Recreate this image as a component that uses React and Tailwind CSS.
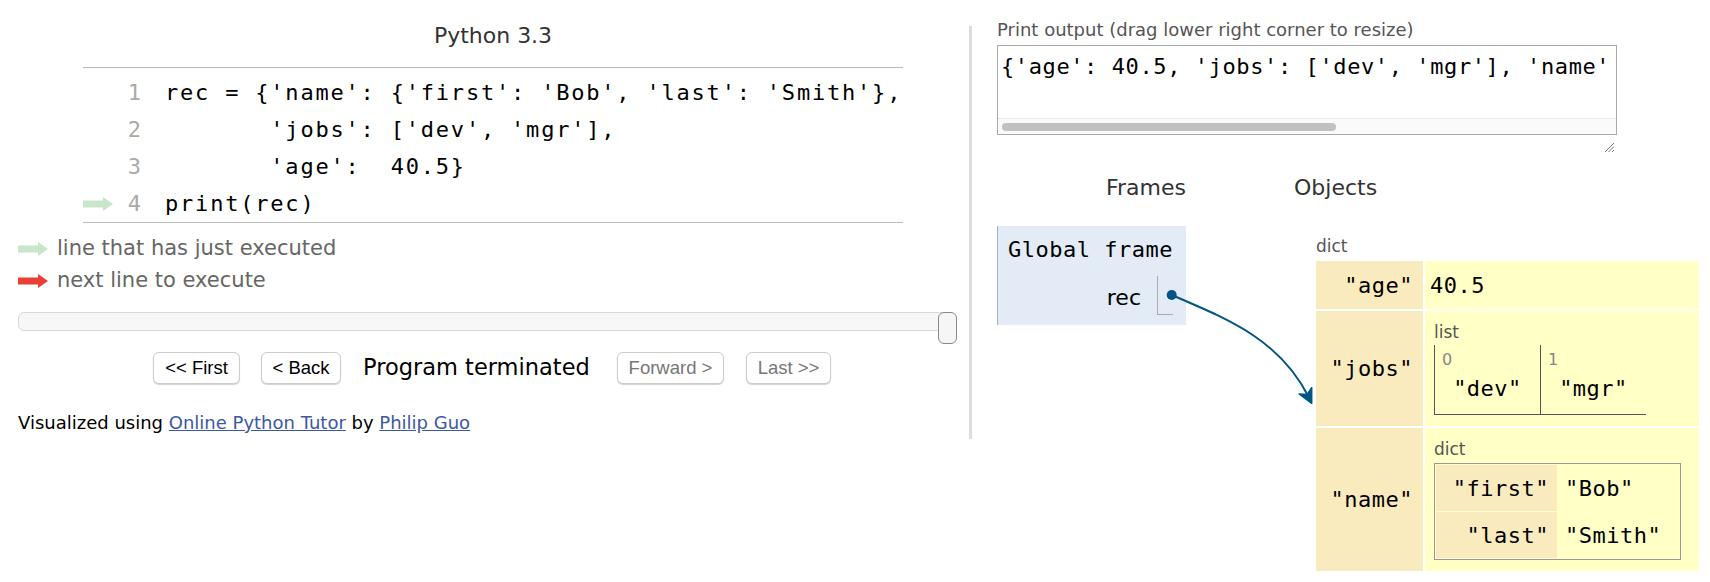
const codeLines = [
  "rec = {'name': {'first': 'Bob', 'last': 'Smith'},",
  "       'jobs': ['dev', 'mgr'],",
  "       'age':  40.5}",
  'print(rec)',
];

function Arrow({ color }) {
  return (
    <svg width="30" height="14" viewBox="0 0 30 14" className="shrink-0">
      <path d="M0 3.5H20V0L30 7L20 14V10.5H0Z" fill={color} />
    </svg>
  );
}

function VcrButton({ label, width, disabled }) {
  return (
    <button
      className={`h-[32px] ${width} shrink-0 rounded-[6px] border border-[#ccc] bg-white font-['Liberation_Sans',sans-serif] text-[18.5px] shadow-[0_1px_1px_rgba(0,0,0,0.18)] ${disabled ? 'text-[#777]' : 'text-black'}`}
    >
      {label}
    </button>
  );
}

function CodePanel() {
  return (
    <div className="mt-[26px] h-[413px] w-[972px] shrink-0 border-r-[3px] border-[#ddd] font-['DejaVu_Sans',sans-serif]">
      <div className="ml-[83px] w-[820px]">
        <div className="h-[41px] text-center text-[22px] leading-[19px] text-[#333]">Python 3.3</div>
        <div className="border-y border-[#bbb] pt-[6px] font-['DejaVu_Sans_Mono',monospace] text-[22px]">
          {codeLines.map((line, i) => (
            <div key={i} className="flex h-[37px] items-center">
              <div className="w-[35px] shrink-0">{i === 3 && <Arrow color="#c9e6ca" />}</div>
              <div className="w-[23px] shrink-0 text-right text-[#aaa]">{i + 1}</div>
              <div className="whitespace-pre pl-[24px] tracking-[1.8px] text-black">{line}</div>
            </div>
          ))}
        </div>
      </div>

      <div className="ml-[18px] mt-[10px] text-[21px] text-[#666]">
        <div className="flex h-[32px] items-center gap-[9px]">
          <Arrow color="#c9e6ca" />
          <span>line that has just executed</span>
        </div>
        <div className="flex h-[32px] items-center gap-[9px]">
          <Arrow color="#e93f34" />
          <span>next line to execute</span>
        </div>
      </div>

      <div className="relative ml-[18px] mt-[15px] h-[32px] w-[939px]">
        <div className="mt-[5px] h-[19px] w-[930px] rounded-[6px] border border-[#d8d8d8] bg-[#f7f7f7]" />
        <div className="absolute right-0 top-0 h-[32px] w-[19px] rounded-[6px] border-[1.5px] border-[#888] bg-[#f6f6f6]" />
      </div>

      <div className="ml-[153px] mt-[8px] flex h-[32px] items-center">
        <VcrButton label="<< First" width="w-[87px]" />
        <div className="ml-[21px]">
          <VcrButton label="< Back" width="w-[80px]" />
        </div>
        <div className="ml-[22px] w-[231px] shrink-0 text-[22.5px] text-black">Program terminated</div>
        <div className="ml-[23px]">
          <VcrButton label="Forward >" width="w-[107px]" disabled />
        </div>
        <div className="ml-[22px]">
          <VcrButton label="Last >>" width="w-[85px]" disabled />
        </div>
      </div>

      <div className="ml-[18px] mt-[28px] text-[18px] leading-[22px] text-black">
        Visualized using <a href="#" className="text-[#3d58a2] underline">Online Python Tutor</a> by{' '}
        <a href="#" className="text-[#3d58a2] underline">Philip Guo</a>
      </div>
    </div>
  );
}

function ListCell({ index, value }) {
  return (
    <div className="h-[69px] w-[106px] border-l border-[#555]">
      <div className="pl-[7px] pt-[5px] font-['DejaVu_Sans',sans-serif] text-[16px] leading-[20px] text-[#888]">{index}</div>
      <div className="mt-[6px] text-center leading-[26px] tracking-[0.5px]">{value}</div>
    </div>
  );
}

function VizPanel() {
  return (
    <div className="flex-1 pl-[25px] font-['DejaVu_Sans',sans-serif]">
      <div className="pt-[19px] text-[18px] leading-[22px] text-[#555]">Print output (drag lower right corner to resize)</div>
      <div className="mt-[4px] flex h-[90px] w-[620px] flex-col overflow-hidden border border-[#a9a9a9]">
        <div className="flex-1 overflow-hidden whitespace-pre px-[3px] pt-[8px] font-['DejaVu_Sans_Mono',monospace] text-[22px] leading-[26px] tracking-[0.6px] text-black">
          {"{'age': 40.5, 'jobs': ['dev', 'mgr'], 'name'"}
        </div>
        <div className="h-[16px] border-t border-[#e8e8e8] bg-[#fafafa] pl-[4px] pt-[4px]">
          <div className="h-[8px] w-[334px] rounded-full bg-[#c1c1c1]" />
        </div>
      </div>
      <div className="mt-[7px] flex h-[10px] w-[620px] justify-end pr-[3px]">
        <svg width="10" height="10" viewBox="0 0 10 10">
          <path d="M10 1L1 10M10 4.5L4.5 10M10 8L8 10" stroke="#777" strokeWidth="1" />
        </svg>
      </div>

      <div className="mt-[23px] flex text-[22px] leading-[26px] text-[#333]">
        <span className="w-[189px] text-right">Frames</span>
        <span className="ml-[108px]">Objects</span>
      </div>

      <div className="mt-[25px] flex items-start">
        <div className="w-[189px] shrink-0 border-l border-[#a6b3b6] bg-[#e2ebf6] pb-[10px] pl-[10px] pr-[13px] pt-[11px]">
          <div className="whitespace-nowrap font-['DejaVu_Sans_Mono',monospace] text-[22px] leading-[26px] tracking-[0.5px] text-black">Global frame</div>
          <div className="mt-[13px] flex h-[39px] items-center justify-end">
            <span className="mr-[16px] pt-[3px] text-[22px] text-black">rec</span>
            <div className="h-[39px] w-[16px] border-b border-l border-[#aaa]" />
          </div>
        </div>

        <div className="ml-[130px] pt-[10px]">
          <div className="text-[17px] leading-[20px] text-[#555]">dict</div>
          <div className="mt-[5px] grid w-[383px] grid-cols-[107px_274px] gap-[2px] font-['DejaVu_Sans_Mono',monospace] text-[22px] text-black">
            <div className="flex h-[48px] items-center justify-end bg-[#faebbf] pr-[10px] tracking-[0.5px]">"age"</div>
            <div className="flex h-[48px] items-center bg-[#ffffc6] pl-[5px] tracking-[0.5px]">40.5</div>

            <div className="flex h-[115px] items-center justify-end bg-[#faebbf] pr-[10px] tracking-[0.5px]">"jobs"</div>
            <div className="h-[115px] bg-[#ffffc6] pl-[9px] pt-[11px]">
              <div className="font-['DejaVu_Sans',sans-serif] text-[17px] leading-[20px] text-[#555]">list</div>
              <div className="mt-[3px] flex w-[212px] border-b border-[#555]">
                <ListCell index="0" value={'"dev"'} />
                <ListCell index="1" value={'"mgr"'} />
              </div>
            </div>

            <div className="flex h-[143px] items-center justify-end bg-[#faebbf] pr-[10px] tracking-[0.5px]">"name"</div>
            <div className="h-[143px] bg-[#ffffc6] pl-[9px] pt-[11px]">
              <div className="font-['DejaVu_Sans',sans-serif] text-[17px] leading-[20px] text-[#555]">dict</div>
              <div className="mt-[4px] grid w-[247px] grid-cols-[121px_121px] gap-y-[1px] border border-[#999] p-[1px]">
                <div className="flex h-[46px] items-center justify-end bg-[#faebbf] pr-[8px] tracking-[0.5px]">"first"</div>
                <div className="flex h-[46px] items-center pl-[8px] tracking-[0.5px]">"Bob"</div>
                <div className="flex h-[46px] items-center justify-end bg-[#faebbf] pr-[8px] tracking-[0.5px]">"last"</div>
                <div className="flex h-[46px] items-center pl-[8px] tracking-[0.5px]">"Smith"</div>
              </div>
            </div>
          </div>
        </div>
      </div>
    </div>
  );
}

export default function App() {
  return (
    <div className="relative flex h-[582px] w-[1710px] overflow-hidden bg-white">
      <CodePanel />
      <VizPanel />
      <svg className="pointer-events-none absolute left-0 top-0" width="1710" height="582" viewBox="0 0 1710 582">
        <circle cx="1171.7" cy="295" r="5" fill="#005583" />
        <path d="M1171.7 295C1230 320 1280 340 1309 397.5" fill="none" stroke="#005583" strokeWidth="2" />
        <path d="M1311.7 403.3L1299.1 393.9L1307.2 394.4L1311.7 387.7Z" fill="#005583" stroke="#005583" strokeWidth="1.5" strokeLinejoin="round" />
      </svg>
    </div>
  );
}
